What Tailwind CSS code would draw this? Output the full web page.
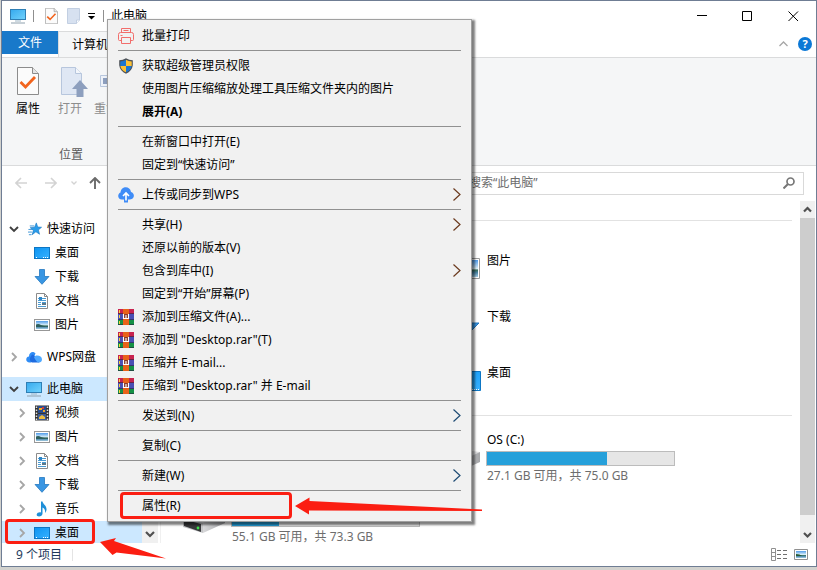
<!DOCTYPE html>
<html lang="zh-CN">

<head>
  <meta charset="utf-8" />
  <meta name="viewport" content="width=device-width, initial-scale=1" />
  <title>此电脑</title>
  <script src="https://cdn.jsdelivr.net/npm/@tailwindcss/browser@4"></script>
</head>

<body class="relative flex min-h-screen flex-col bg-[#d2d2ce] pb-[3px] pl-px font-['Noto_Sans','Noto_Sans_CJK_SC',sans-serif] text-xs/[18px] text-black select-none">

  <!-- Icons -->
  <svg class="absolute size-0">
    <defs>
      <linearGradient id="screen" x1="0" y1="0" x2="1" y2="1">
        <stop offset="0" stop-color="#35a9ee" />
        <stop offset="1" stop-color="#72d3fd" />
      </linearGradient>
      <linearGradient id="blue" x1="0" y1="0" x2="1" y2="1">
        <stop offset="0" stop-color="#0c94f2" />
        <stop offset="1" stop-color="#37b1ff" />
      </linearGradient>
      <linearGradient id="photo" x1="0" y1="0" x2="0" y2="1">
        <stop offset="0" stop-color="#4f9bea" />
        <stop offset="0.5" stop-color="#d9eef8" />
        <stop offset="0.6" stop-color="#39705f" />
        <stop offset="0.75" stop-color="#4b86a8" />
        <stop offset="1" stop-color="#a5cde4" />
      </linearGradient>
      <linearGradient id="metal" x1="0" y1="0" x2="1" y2="0">
        <stop offset="0" stop-color="#d8d8da" />
        <stop offset="1" stop-color="#a5a6a9" />
      </linearGradient>
    </defs>
    <symbol id="i-pc" viewBox="0 0 16 16">
      <rect x="0.5" y="1.5" width="15" height="10" fill="url(#screen)" stroke="#2f7fb5" />
      <path d="M5 13h6" stroke="#9fb6c6" />
      <path d="M1 15h14" stroke="#8ea0ad" />
    </symbol>
    <symbol id="i-desktop" viewBox="0 0 16 16">
      <rect x="0.5" y="2.5" width="15" height="11" fill="url(#blue)" stroke="#0d76c4" />
      <path d="M2 12.5h1M9 12.5h1M11 12.5h1M13 12.5h1" stroke="#fff" />
    </symbol>
    <symbol id="i-down" viewBox="0 0 16 16">
      <path d="M5.5 0.5h5v7h4.5L8 15.3 1 7.5h4.5z" fill="#3996e3" stroke="#2578c0" stroke-width="0.8" />
    </symbol>
    <symbol id="i-doc" viewBox="0 0 16 16">
      <path d="M2.5 0.5h8l3 3v12h-11z" fill="#fff" stroke="#8b8b8b" />
      <path d="M10.5 0.5v3h3" fill="none" stroke="#8b8b8b" />
      <path d="M4 5.5h2M7.5 5.5h4.5M4 7.5h8M4 9.5h3M8 9.5h4M4 11.5h3M4 13.5h8" stroke="#4a9bd3" />
      <path d="M5 4h3v3H5z" fill="#2f86c8" />
      <path d="M8 10h4v2H8z" fill="#5d7888" />
    </symbol>
    <symbol id="i-pic" viewBox="0 0 16 16">
      <rect x="0.5" y="2.5" width="15" height="11" fill="#fff" stroke="#979797" />
      <rect x="2" y="4" width="12" height="8" fill="url(#photo)" />
      <path d="M2 7.500q2.500-1 5 0.500t7 1v1H2z" fill="#2d5f5d" />
    </symbol>
    <symbol id="i-video" viewBox="0 0 16 16">
      <rect x="1" y="0.5" width="14" height="15" fill="#333" />
      <path d="M2.5 1.5v14M13.5 1.5v14" stroke="#e2e2e2" stroke-width="1.5" stroke-dasharray="1.5 1.5" />
      <rect x="4" y="1" width="8" height="7" fill="#274c8f" />
      <rect x="4" y="9" width="8" height="6" fill="#3b5d98" />
      <path d="M5 3h3v2H5zM9 5h2v2H9z" fill="#f2ac28" />
      <path d="M8 2h2v2H8z" fill="#d03d36" />
      <path d="M5 12l3-2 3 2v2H5z" fill="#edbd3d" />
    </symbol>
    <symbol id="i-music" viewBox="0 0 16 16">
      <path d="M7 0.5h1.5c0.5 3 4.5 4 4 8.5-0.3 1.5-1 2.5-1.5 3 0.5-3-0.500-4.500-2.500-5.500v6c0 2-1.800 3-3.500 3-1.500 0-2.500-0.800-2.300-2C3 12 5 11 7 11.500z" fill="#1e8fd8" />
    </symbol>
    <symbol id="i-star" viewBox="0 0 16 16">
      <path d="M9.5 1l1.6 4.700 4.400 0.300-3.600 3 1.300 5L9 11.200 4.800 14.500l1.300-5L2.500 6.500l5-0.500z" fill="#2a9cea" stroke="#1977c0" stroke-width="0.7" />
      <path d="M2 4.5h5M0.5 8.5h5M0 11.5h4.5M1 14.5h3" stroke="#2d8bd2" />
    </symbol>
    <symbol id="i-wps" viewBox="0 0 16 16">
      <path d="M3.5 13.5C-0.5 13.5-1 8 3 7.500 3 3 7.500 1.500 9.500 4.500L5 13.500z" fill="#2f8cf5" />
      <path d="M6.5 5.5C9 5.5 9.5 10 13.5 13.5H6C3.5 12.5 3 8 6.500 5.500z" fill="#1d6be0" />
      <path d="M10 6.5c3-0.500 6 1 6 4 0 2-1.500 3-3 3-2 0-4-3-5-5.500z" fill="#4fa9ff" />
    </symbol>
    <symbol id="i-cloud" viewBox="0 0 16 16">
      <path d="M4 12.5C-0.5 12.5-1 7 2.500 5.500 3-1 12-1.500 13 5c4 1 4 7.500-1 7.500z" fill="#3f8cf7" />
      <path d="M6 12h4v3.500H6z" fill="#3f8cf7" />
      <path d="M8 13.500V6.500M5 9l3-3 3 3" fill="none" stroke="#fff" stroke-width="1.6" />
    </symbol>
    <symbol id="i-print" viewBox="0 0 16 16">
      <path d="M3.5 4V0.5h9V4M3.5 12.5h-2q-1 0-1-1v-5q0-2 2-2h11q2 0 2 2v5q0 1-1 1h-2M3.5 9.5h9v6h-9zM2.5 7.5h2M5.5 2.5h5" fill="none" stroke="#f26d6b" />
    </symbol>
    <symbol id="i-shield" viewBox="0 0 16 16">
      <path d="M8 0.3q3 2 6.800 2v5q-0.800 6-6.800 8.400-6-2.400-6.800-8.400v-5Q5 2.300 8 0.300z" fill="#4c5158" />
      <path d="M8 1.8V8H2.300V3.500Q5.500 3.300 8 1.800z" fill="#1b76d1" />
      <path d="M8 1.8V8h5.700V3.500Q10.500 3.300 8 1.800z" fill="#fcc134" />
      <path d="M8 8v6.300Q3.200 12.500 2.400 8z" fill="#fcc134" />
      <path d="M8 8v6.300Q12.800 12.500 13.600 8z" fill="#1b76d1" />
    </symbol>
    <symbol id="i-rar" viewBox="0 0 16 16">
      <path d="M0 0h16v5H0z" fill="#c8234f" />
      <path d="M0 5h16v6H0z" fill="#4a4fb4" />
      <path d="M0 11h16v5H0z" fill="#149145" />
      <path d="M0 4.5h16M0 10.5h16M0 15.5h16" stroke="#26233f" stroke-opacity="0.6" />
      <path d="M5 0h6v16H5z" fill="#e8621a" />
      <path d="M1 1h1v3H1zM1 6h1v3H1zM1 12h1v3H1z" fill="#f7d23e" />
      <path d="M5 5h6v5H5z" fill="#8a3a2a" />
      <path d="M5.5 5v4.500h5V5M8 6v3" fill="none" stroke="#fff" stroke-width="1.1" />
    </symbol>
    <symbol id="i-check" viewBox="0 0 22 28">
      <path d="M0.5 0.5h15l6 6v21h-21z" fill="#fbfbfb" stroke="#8c8c8c" />
      <path d="M15.5 0.5v6h6" fill="#e5e5e5" stroke="#8c8c8c" />
      <path d="M3.5 15l5 5L18 10" fill="none" stroke="#f2641d" stroke-width="2.8" />
    </symbol>
    <symbol id="i-drive" viewBox="0 0 48 48">
      <path d="M6 23l18-8 24 3-20 10z" fill="#dddddf" />
      <path d="M26 28l22-10v10L26 38z" fill="url(#metal)" />
      <path d="M6 23l20 5v10L6 32z" fill="#c5c6c8" />
      <path d="M7 24.5l17 4.500v8L7 31z" fill="#38393b" />
      <circle cx="21" cy="33" r="1.4" fill="#3ee04b" />
    </symbol>
    <symbol id="i-next" viewBox="0 0 8 14">
      <path d="M0.5 0.5l6.5 6-6.5 6" fill="none" stroke="currentColor" stroke-width="1.2" />
    </symbol>
    <symbol id="i-closed" viewBox="0 0 10 10">
      <path d="M3 1l4 4-4 4" fill="none" stroke="#a6a6a6" stroke-width="1.8" />
    </symbol>
    <symbol id="i-open" viewBox="0 0 10 10">
      <path d="M1 3l4 4 4-4" fill="none" stroke="#404040" stroke-width="1.9" />
    </symbol>
  </svg>

  <!-- Explorer window -->
  <div class="flex flex-1 flex-col border border-[#6f7d94] bg-white">

    <!-- Title bar -->
    <header class="flex h-[30px] items-center">
      <div class="flex flex-1 items-center pl-2">
        <svg class="size-4"><use href="#i-pc" /></svg>
        <span class="ml-[7px] h-3 w-px bg-[#8f8f8f]"></span>
        <button aria-label="属性" class="ml-[11px]"><svg class="h-4 w-[13px]"><use href="#i-check" /></svg></button>
        <button aria-label="新建文件夹" class="ml-[9px]">
          <svg class="h-4 w-[13px]" viewBox="0 0 13 16">
            <path d="M0.5 0.5h12V12l-3 3.5h-9z" fill="#d7e1f0" stroke="#c2cfe2" />
            <path d="M12.5 12h-3v3.5" fill="#fff" stroke="#c2cfe2" />
          </svg>
        </button>
        <button aria-label="自定义快速访问工具栏" class="ml-2">
          <svg class="h-2 w-[7px]" viewBox="0 0 7 8"><path d="M0 1.5h7" stroke="#000" /><path d="M0 4h7L3.5 7.5z" /></svg>
        </button>
        <span class="ml-2 h-3 w-px bg-[#8f8f8f]"></span>
        <h1 class="ml-[7px]">此电脑</h1>
      </div>
      <button aria-label="最小化" class="flex h-full w-[46px] items-center justify-center">
        <svg class="size-[11px]" viewBox="0 0 11 11"><path d="M1 4.5h10" stroke="#000" /></svg>
      </button>
      <button aria-label="最大化" class="flex h-full w-[46px] items-center justify-center">
        <svg class="size-[11px]" viewBox="0 0 11 11"><path d="M0.5 0.5h9v9h-9z" fill="none" stroke="#000" /></svg>
      </button>
      <button aria-label="关闭" class="flex h-full w-[46px] items-center justify-center">
        <svg class="size-[11px]" viewBox="0 0 11 11"><path d="M0.5 0.5l9.5 9.5M10 0.5L0.5 10" stroke="#000" /></svg>
      </button>
    </header>

    <!-- Ribbon tabs -->
    <nav class="flex h-[26px]">
      <button class="h-[23px] w-14 bg-[#1979ca] pt-px text-white">文件</button>
      <button class="-mb-px h-[27px] w-[74px] border border-b-0 border-[#dadbdc] bg-[#f5f6f7] pl-[13px] text-left">计算机</button>
      <div class="ml-auto flex items-center gap-[10px] pr-1">
        <button aria-label="最小化功能区">
          <svg class="h-[6px] w-[9px]" viewBox="0 0 9 6"><path d="M0.5 5l4-4 4 4" fill="none" stroke="#a6a6a6" stroke-width="1.3" /></svg>
        </button>
        <button aria-label="帮助" class="size-[14px] rounded-full bg-[#0b78d6] text-[11px]/[14px] font-bold text-white">?</button>
      </div>
    </nav>

    <!-- Ribbon -->
    <section class="flex h-[109px] flex-col items-start border-y border-[#dadbdc] bg-[#f5f6f7] pb-px">
      <div class="flex flex-1 pt-[9px] pl-[5px]">
        <button class="flex w-[42px] flex-col items-center gap-[5px]">
          <svg class="h-7 w-[22px]"><use href="#i-check" /></svg>
          属性
        </button>
        <button disabled class="flex w-[42px] flex-col items-center gap-[5px] text-[#8d8d8d]">
          <svg class="-mb-[3px] ml-2 h-[31px] w-7" viewBox="0 0 28 31">
            <path d="M1.5 0.5h14l6 6v21h-20z" fill="#dfe7f4" stroke="#b7c6dd" />
            <path d="M15.5 0.5v6h6" fill="#f3f6fb" stroke="#b7c6dd" />
            <path d="M20 13l8 9h-4.500v8h-7v-8H12z" fill="#8d9fbe" />
          </svg>
          打开
        </button>
        <button disabled class="flex w-[42px] flex-col items-center gap-[5px] text-[#8d8d8d]">
          <svg class="mr-1 h-7 w-5" viewBox="0 0 20 28">
            <path d="M0.5 8.5h19v11h-19z" fill="#eef2f9" stroke="#b7c6dd" />
            <path d="M3 11h9v6H3z" fill="#8d9fbe" />
          </svg>
          重命名
        </button>
      </div>
      <p class="w-[138px] text-center text-[#5a5a5a]">位置</p>
    </section>

    <!-- Navigation and search -->
    <section class="flex h-[34px] items-center pr-3 pl-[13px] text-[#d3d3d3]">
      <button disabled aria-label="后退">
        <svg class="size-3" viewBox="0 0 12 12"><path d="M12 6H1M6 1L1 6l5 5" fill="none" stroke="currentColor" stroke-width="1.6" /></svg>
      </button>
      <button disabled aria-label="前进" class="ml-[18px]">
        <svg class="size-3" viewBox="0 0 12 12"><path d="M0 6h11M6 1l5 5-5 5" fill="none" stroke="currentColor" stroke-width="1.6" /></svg>
      </button>
      <button disabled aria-label="最近浏览的位置" class="ml-[14px]">
        <svg class="h-1 w-[6px]" viewBox="0 0 6 4"><path d="M0.5 0.5L3 3l2.500-2.500" fill="none" stroke="currentColor" stroke-width="1.3" /></svg>
      </button>
      <button aria-label="上移" class="ml-3 text-[#6b6b6b]">
        <svg class="size-3" viewBox="0 0 12 12"><path d="M6 12V1M1 6l5-5 5 5" fill="none" stroke="currentColor" stroke-width="1.9" /></svg>
      </button>
      <label class="ml-auto flex h-[23px] w-[340px] items-center border border-[#d9d9d9] px-1">
        <input type="search" aria-label="搜索此电脑" placeholder="搜索“此电脑”" class="min-w-0 flex-1 outline-none placeholder:text-[#6d6d6d]" />
        <svg class="mr-1 size-3" viewBox="0 0 12 12">
          <circle cx="7.5" cy="4.5" r="3.5" fill="none" stroke="#777" stroke-width="1.7" />
          <path d="M5 7l-4.500 4.500" stroke="#777" stroke-width="2" />
        </svg>
      </label>
    </section>

    <div class="flex flex-1">
      <!-- Folder tree -->
      <aside class="w-[140px] pt-[17px]">
        <ul>
          <li class="flex h-6 items-center pl-[7px]">
            <svg class="size-[10px]"><use href="#i-open" /></svg>
            <svg class="mr-[5px] ml-[9px] size-[14px]"><use href="#i-star" /></svg>
            <a href="#">快速访问</a>
          </li>
          <li class="flex h-6 items-center pl-8">
            <svg class="mr-[5px] size-4"><use href="#i-desktop" /></svg>
            <a href="#">桌面</a>
          </li>
          <li class="flex h-6 items-center pl-8">
            <svg class="mr-[5px] size-4"><use href="#i-down" /></svg>
            <a href="#">下载</a>
          </li>
          <li class="flex h-6 items-center pl-8">
            <svg class="mr-[5px] size-4"><use href="#i-doc" /></svg>
            <a href="#">文档</a>
          </li>
          <li class="flex h-6 items-center pl-8">
            <svg class="mr-[5px] size-4"><use href="#i-pic" /></svg>
            <a href="#">图片</a>
          </li>
          <li class="my-2 flex h-6 items-center pl-[7px]">
            <svg class="size-[10px]"><use href="#i-closed" /></svg>
            <svg class="mr-[5px] ml-[7px] size-4"><use href="#i-wps" /></svg>
            <a href="#">WPS网盘</a>
          </li>
          <li class="flex h-6 items-center bg-[#cce8ff] pl-[7px]">
            <svg class="size-[10px]"><use href="#i-open" /></svg>
            <svg class="mr-[5px] ml-[7px] size-4"><use href="#i-pc" /></svg>
            <a href="#">此电脑</a>
          </li>
          <li class="flex h-6 items-center pl-[15px]">
            <svg class="size-[10px]"><use href="#i-closed" /></svg>
            <svg class="mr-[5px] ml-[7px] size-4"><use href="#i-video" /></svg>
            <a href="#">视频</a>
          </li>
          <li class="flex h-6 items-center pl-[15px]">
            <svg class="size-[10px]"><use href="#i-closed" /></svg>
            <svg class="mr-[5px] ml-[7px] size-4"><use href="#i-pic" /></svg>
            <a href="#">图片</a>
          </li>
          <li class="flex h-6 items-center pl-[15px]">
            <svg class="size-[10px]"><use href="#i-closed" /></svg>
            <svg class="mr-[5px] ml-[7px] size-4"><use href="#i-doc" /></svg>
            <a href="#">文档</a>
          </li>
          <li class="flex h-6 items-center pl-[15px]">
            <svg class="size-[10px]"><use href="#i-closed" /></svg>
            <svg class="mr-[5px] ml-[7px] size-4"><use href="#i-down" /></svg>
            <a href="#">下载</a>
          </li>
          <li class="flex h-6 items-center pl-[15px]">
            <svg class="size-[10px]"><use href="#i-closed" /></svg>
            <svg class="mr-[5px] ml-[7px] size-4"><use href="#i-music" /></svg>
            <a href="#">音乐</a>
          </li>
          <li class="relative flex h-[22px] items-center bg-[#cce8ff] pt-px pl-[15px]">
            <svg class="size-[10px]"><use href="#i-closed" /></svg>
            <svg class="mr-[5px] ml-[7px] size-4"><use href="#i-desktop" /></svg>
            <a href="#">桌面</a>
            <span class="absolute -top-[2px] left-[3px] h-[25px] w-[90px] rounded-sm border-3 border-[#fb1e12]"></span>
          </li>
        </ul>
      </aside>
      <div class="flex w-4 flex-col items-center justify-end bg-[#f0f0f0] pb-1">
        <svg class="size-[10px]" viewBox="0 0 10 10"><path d="M1 3l4 4 4-4" fill="none" stroke="#505050" stroke-width="2.2" /></svg>
      </div>

      <!-- Folders and drives -->
      <main class="ml-[2px] flex-1 border-l border-[#f0f0f0] pt-5">
        <section class="mr-2 grid grid-cols-[255px_255px] gap-y-2 border-t border-[#e2e2e2] pt-6 pl-4">
          <a href="#" class="col-start-2 flex gap-[7px]">
            <svg class="size-12" viewBox="0 0 48 48">
              <path d="M2.5 13.5h45v20h-45z" fill="#fff" stroke="#9a9a9a" />
              <path d="M5 15h41v17H5z" fill="url(#photo)" />
            </svg>
            <span class="pt-[7px]">图片</span>
          </a>
          <a href="#" class="col-start-2 flex gap-[7px]">
            <svg class="size-12" viewBox="0 0 48 48"><path d="M17 3h14v19h16L24 45 1 22h16z" fill="#3996e3" stroke="#2578c0" /></svg>
            <span class="pt-[7px]">下载</span>
          </a>
          <a href="#" class="col-start-2 flex gap-[7px]">
            <svg class="size-12 overflow-visible" viewBox="0 0 48 48">
              <path d="M0.5 14.5h48v19H0.5z" fill="url(#blue)" stroke="#0d76c4" />
              <path d="M38 32.5h9" stroke="#fff" stroke-dasharray="1 1" />
            </svg>
            <span class="pt-[7px]">桌面</span>
          </a>
        </section>
        <section class="mt-[10px] mr-2 -mb-1 grid grid-cols-[255px_255px] gap-y-[7px] border-t border-[#e2e2e2] pt-[15px] pl-4">
          <a href="#" class="col-start-2 flex items-center gap-[6px]">
            <svg class="size-12"><use href="#i-drive" /></svg>
            <div class="w-[189px]">
              <p class="pl-px">OS (C:)</p>
              <div class="mt-[2px] h-[15px] border border-[#bcbcbc] bg-[#e6e6e6]"><div class="h-full bg-[#26a0da]" style="width: 64%"></div></div>
              <p class="mt-px pl-px text-[#6d6d6d]">27.1 GB 可用，共 75.0 GB</p>
            </div>
          </a>
          <a href="#" class="col-start-1 flex items-center gap-[6px]">
            <svg class="size-12"><use href="#i-drive" /></svg>
            <div class="w-[189px]">
              <div class="mt-5 h-[15px] border border-[#bcbcbc] bg-[#e6e6e6]"><div class="h-full bg-[#26a0da]" style="width: 25%"></div></div>
              <p class="mt-px pl-px text-[#6d6d6d]">55.1 GB 可用，共 73.3 GB</p>
            </div>
          </a>
        </section>
      </main>
      <div class="mt-px mr-px flex w-[15px] flex-col items-center bg-[#f0f0f0]">
        <svg class="my-1 h-[9px] w-[9px]" viewBox="0 0 9 9"><path d="M1 6.5L4.500 3 8 6.500" fill="none" stroke="#505050" stroke-width="2.2" /></svg>
        <div class="w-full flex-1 bg-[#cdcdcd]"></div>
        <svg class="mt-[15px] mb-1 h-[9px] w-[9px]" viewBox="0 0 9 9"><path d="M1 3l3.500 3.500L8 3" fill="none" stroke="#505050" stroke-width="2.2" /></svg>
      </div>
    </div>

    <!-- Status bar -->
    <footer class="flex h-[23px] items-center pr-2 pl-[14px] text-[#1e395b]">
      <span>9 个项目</span>
      <span class="ml-[10px] h-3 w-px bg-[#e4e4e4]"></span>
      <button aria-label="详细信息" class="ml-auto">
        <svg class="h-[13px] w-4" viewBox="0 0 16 13">
          <path d="M0.5 0.5h4v12h-4zM0.5 4.5h4M0.5 8.5h4" fill="none" stroke="#909090" />
          <path d="M6 2.5h4M12 2.5h4M6 6.5h4M12 6.5h4M6 10.5h4M12 10.5h4" stroke="#707070" />
        </svg>
      </button>
      <button aria-label="大图标" class="ml-[7px]">
        <svg class="h-[11px] w-[14px]" viewBox="0 0 14 11">
          <path d="M0.5 0.5h13v10h-13z" fill="#fff" stroke="#909090" />
          <path d="M2 2h10v7H2z" fill="url(#photo)" />
          <path d="M2 5q4 0 6 2H2z" fill="#255a35" />
        </svg>
      </button>
    </footer>
  </div>

  <!-- Context menu -->
  <div role="menu" class="absolute top-[19px] left-[107px] w-[365px] border border-[#a0a0a0] bg-[#f1f1f1] py-1 shadow-[2px_2px_2px_1px_rgba(0,0,0,0.5)]">
    <button role="menuitem" class="flex h-[23px] w-full items-center gap-2 pl-[10px]"><svg class="size-4"><use href="#i-print" /></svg>批量打印</button>
    <hr class="mx-[10px] my-[3px] border-[#919191]" />
    <button role="menuitem" class="flex h-[23px] w-full items-center gap-2 pl-[10px]"><svg class="size-4"><use href="#i-shield" /></svg>获取超级管理员权限</button>
    <button role="menuitem" class="flex h-[23px] w-full items-center pl-[34px]">使用图片压缩缩放处理工具压缩文件夹内的图片</button>
    <button role="menuitem" class="flex h-[23px] w-full items-center pl-[34px] font-bold">展开(A)</button>
    <hr class="mx-[10px] my-[3px] border-[#919191]" />
    <button role="menuitem" class="flex h-[23px] w-full items-center pl-[34px]">在新窗口中打开(E)</button>
    <button role="menuitem" class="flex h-[23px] w-full items-center pl-[34px]">固定到“快速访问”</button>
    <hr class="mx-[10px] my-[3px] border-[#919191]" />
    <button role="menuitem" class="flex h-[23px] w-full items-center gap-2 px-[10px]"><svg class="size-4"><use href="#i-cloud" /></svg>上传或同步到WPS<svg class="ml-auto h-[14px] w-2 text-[#6b3a1e]"><use href="#i-next" /></svg></button>
    <hr class="mx-[10px] my-[3px] border-[#919191]" />
    <button role="menuitem" class="flex h-[23px] w-full items-center pr-[10px] pl-[34px]">共享(H)<svg class="ml-auto h-[14px] w-2 text-[#6b3a1e]"><use href="#i-next" /></svg></button>
    <button role="menuitem" class="flex h-[23px] w-full items-center pl-[34px]">还原以前的版本(V)</button>
    <button role="menuitem" class="flex h-[23px] w-full items-center pr-[10px] pl-[34px]">包含到库中(I)<svg class="ml-auto h-[14px] w-2 text-[#6b3a1e]"><use href="#i-next" /></svg></button>
    <button role="menuitem" class="flex h-[23px] w-full items-center pl-[34px]">固定到“开始”屏幕(P)</button>
    <button role="menuitem" class="flex h-[23px] w-full items-center gap-2 pl-[10px]"><svg class="size-4"><use href="#i-rar" /></svg>添加到压缩文件(A)...</button>
    <button role="menuitem" class="flex h-[23px] w-full items-center gap-2 pl-[10px]"><svg class="size-4"><use href="#i-rar" /></svg>添加到 "Desktop.rar"(T)</button>
    <button role="menuitem" class="flex h-[23px] w-full items-center gap-2 pl-[10px]"><svg class="size-4"><use href="#i-rar" /></svg>压缩并 E-mail...</button>
    <button role="menuitem" class="flex h-[23px] w-full items-center gap-2 pl-[10px]"><svg class="size-4"><use href="#i-rar" /></svg>压缩到 "Desktop.rar" 并 E-mail</button>
    <hr class="mx-[10px] my-[3px] border-[#919191]" />
    <button role="menuitem" class="flex h-[23px] w-full items-center pr-[10px] pl-[34px]">发送到(N)<svg class="ml-auto h-[14px] w-2 text-[#1f4c74]"><use href="#i-next" /></svg></button>
    <hr class="mx-[10px] my-[3px] border-[#919191]" />
    <button role="menuitem" class="flex h-[23px] w-full items-center pl-[34px]">复制(C)</button>
    <hr class="mx-[10px] my-[3px] border-[#919191]" />
    <button role="menuitem" class="flex h-[23px] w-full items-center pr-[10px] pl-[34px]">新建(W)<svg class="ml-auto h-[14px] w-2 text-[#1f4c74]"><use href="#i-next" /></svg></button>
    <hr class="mx-[10px] my-[3px] border-[#919191]" />
    <button role="menuitem" class="relative flex h-[23px] w-full items-center pl-[34px]">
      属性(R)
      <span class="absolute -top-[2px] left-3 h-[27px] w-[172px] rounded-sm border-3 border-[#fb1e12]"></span>
    </button>
  </div>

  <!-- Red pointer arrows -->
  <svg class="absolute top-[497px] left-[295px] h-[18px] w-[188px]" viewBox="0 0 188 18">
    <path d="M0 9L14.500 0.500v3.500L187 12.500v1.500L14 13.500V17.500z" fill="#fb1e12" />
  </svg>
  <svg class="absolute top-[537px] left-[100px] h-[23px] w-[67px]" viewBox="0 0 67 23">
    <path d="M0 5L16 1l-2 3L66 21.500 16.500 15.500l-4 2.500z" fill="#fb1e12" />
  </svg>
</body>

</html>
